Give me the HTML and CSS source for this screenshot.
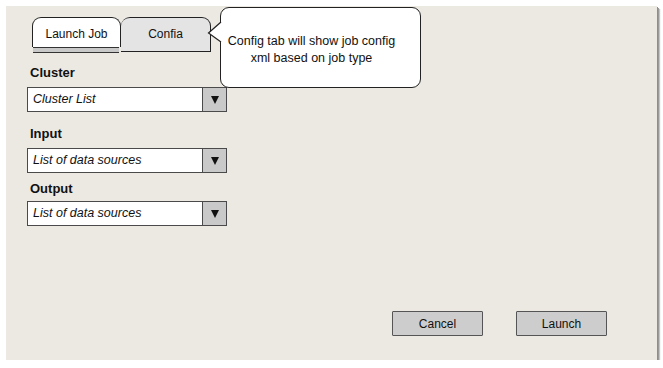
FILE: index.html
```html
<!DOCTYPE html>
<html>
<head>
<meta charset="utf-8">
<link rel="stylesheet" href="styles.css">
</head>
<body>
<div class="panel">
  <div class="tabs">
    <div class="tab tab-active">
      <div class="tab-label">Launch Job</div>
      <div class="tab-strip"></div>
    </div>
    <div class="tab tab-idle">Confia</div>
  </div>

  <div class="callout">
    <svg class="callout-pointer" width="16" height="26" viewBox="0 0 16 26">
      <polygon points="15,0 2,12 15,22" fill="#fff"/>
      <polyline points="14,1 1.5,12 14,21" fill="none" stroke="#222" stroke-width="1.2"/>
    </svg>
    <p class="callout-text">Config tab will show job config<br>xml based on job type</p>
  </div>

  <div class="field field-cluster">
    <div class="field-label">Cluster</div>
    <div class="select"><span class="select-text">Cluster List</span><span class="select-btn"><span class="tri"></span></span></div>
  </div>
  <div class="field field-input">
    <div class="field-label">Input</div>
    <div class="select"><span class="select-text">List of data sources</span><span class="select-btn"><span class="tri"></span></span></div>
  </div>
  <div class="field field-output">
    <div class="field-label">Output</div>
    <div class="select"><span class="select-text">List of data sources</span><span class="select-btn"><span class="tri"></span></span></div>
  </div>

  <div class="actions">
    <button class="btn">Cancel</button>
    <button class="btn">Launch</button>
  </div>
</div>
</body>
</html>
```

FILE: styles.css
```css
html, body {
  margin: 0;
  padding: 0;
  background: #ffffff;
}
body {
  font-family: "Liberation Sans", Arial, sans-serif;
  color: #111;
}
.panel {
  position: relative;
  box-sizing: border-box;
  margin: 6px 0 0 6px;
  width: 651px;
  height: 354px;
  background: #ece9e3;
  box-shadow: 1px 1px 0 #8d8d8d, 2px 2px 0 #9a9a9a, 3px 3px 1px #c4c4c4;
  display: flex;
  flex-direction: column;
  padding: 11px 50px 24px 21px;
}
.tabs {
  display: flex;
  align-items: flex-start;
  margin-left: 5px;
  height: 36px;
}
.tab {
  box-sizing: border-box;
  font-size: 12px;
}
.tab-active {
  width: 89px;
  display: flex;
  flex-direction: column;
}
.tab-label {
  box-sizing: border-box;
  height: 30px;
  background: #fff;
  border: 1px solid #222;
  border-bottom: none;
  border-radius: 9px 9px 0 0;
  text-align: center;
  padding-top: 9px;
}
.tab-strip {
  box-sizing: border-box;
  height: 6px;
  margin: 0 2px 0 1px;
  background: #c9c9c9;
  border-top: 1px solid #333;
  border-bottom: 1px solid #333;
}
.tab-idle {
  width: 90px;
  height: 35px;
  background: #e4e4e4;
  border: 1px solid #222;
  border-left: none;
  border-radius: 9px 9px 0 0;
  text-align: center;
  padding-top: 9px;
}
.callout {
  position: absolute;
  left: 214px;
  top: 1px;
  width: 201px;
  height: 81px;
  box-sizing: border-box;
  background: #fff;
  border: 1px solid #222;
  border-radius: 9px;
}
.callout-pointer {
  position: absolute;
  left: -14px;
  top: 13px;
}
.callout-text {
  margin: 0;
  padding: 25px 18px 0 0;
  font-size: 12.5px;
  line-height: 17px;
  text-align: center;
}
.field-label {
  font-weight: bold;
  font-size: 13px;
  line-height: 16px;
  margin-left: 3px;
}
.field-cluster { margin-top: 12px; }
.field-cluster .field-label { margin-bottom: 6px; }
.field-input { margin-top: 14px; }
.field-input .field-label { margin-bottom: 6px; }
.field-output { margin-top: 8px; }
.field-output .field-label { margin-bottom: 4px; }
.select {
  box-sizing: border-box;
  width: 200px;
  height: 25px;
  background: #fff;
  border: 1px solid #4a4a4a;
  display: flex;
  align-items: stretch;
}
.select-text {
  flex: 1;
  font-style: italic;
  font-size: 12.5px;
  line-height: 23px;
  padding-left: 5px;
}
.select-btn {
  width: 23px;
  background: #c9c9c9;
  border-left: 1px solid #4a4a4a;
  display: flex;
  align-items: center;
  justify-content: center;
}
.tri {
  width: 0;
  height: 0;
  border-left: 4.5px solid transparent;
  border-right: 4.5px solid transparent;
  border-top: 8px solid #111;
}
.actions {
  margin-top: auto;
  display: flex;
  justify-content: flex-end;
  align-items: center;
  gap: 33px;
}
.btn {
  box-sizing: border-box;
  width: 91px;
  height: 25px;
  background: #cdcdcd;
  border: 1.5px solid #555;
  border-radius: 1px;
  font-family: "Liberation Sans", Arial, sans-serif;
  font-size: 12px;
  color: #111;
  padding: 0;
}
```
